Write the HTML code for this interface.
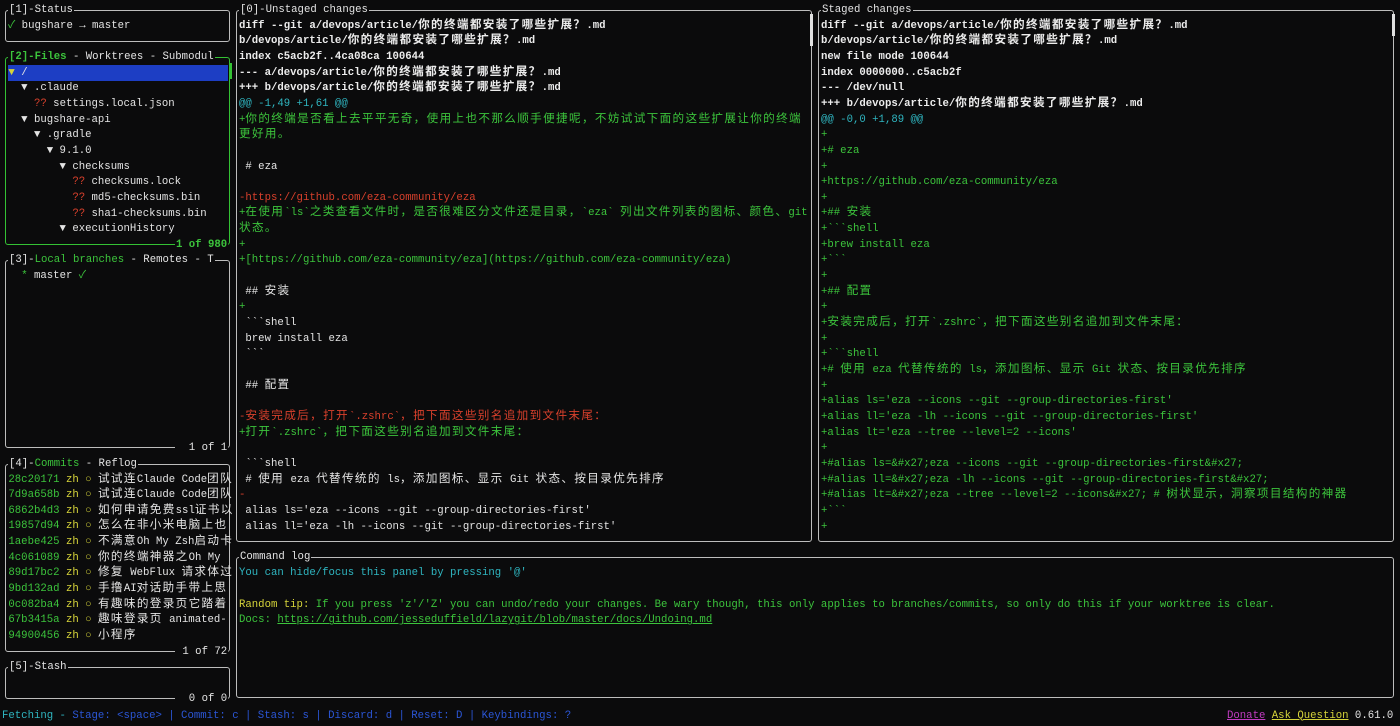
<!DOCTYPE html>
<html><head><meta charset="utf-8"><style>
html,body{margin:0;padding:0;background:#0b0b0c;width:1400px;height:726px;overflow:hidden}
body{position:relative;font-family:"Liberation Mono","Noto Sans CJK SC",monospace;font-size:10.67px;color:#e4e4e4}
.b{position:absolute;border:1px solid #bdbdbd;border-radius:3px;box-sizing:border-box}
.g{border-color:#34c234}
.t{position:absolute;background:#0b0b0c;white-space:pre;line-height:15.65px;padding:0 1px}
pre{position:absolute;margin:0;font:inherit;line-height:15.65px;white-space:pre}
.c{font-family:"Noto Sans CJK SC",sans-serif;font-size:11.6px;letter-spacing:1.35px;line-height:0}
.w{color:#ececec;font-weight:bold}
.gr{color:#3cc43c}.rd{color:#d8402c}.cy{color:#2fb5c0}.ye{color:#d6d43a}.bl{color:#2b56d6}.mg{color:#c23cc2}
.u{text-decoration:underline}
</style></head><body>
<div class="b" style="left:5px;top:10px;width:225px;height:32px"></div>
<div class="b g" style="left:5px;top:57px;width:225px;height:188px"></div>
<div class="b" style="left:5px;top:260px;width:225px;height:188px"></div>
<div class="b" style="left:5px;top:464px;width:225px;height:188px"></div>
<div class="b" style="left:5px;top:667px;width:225px;height:32px"></div>
<div class="b" style="left:236px;top:10px;width:576px;height:532px"></div>
<div class="b" style="left:818px;top:10px;width:576px;height:532px"></div>
<div class="b" style="left:236px;top:557px;width:1158px;height:141px"></div>
<div style="position:absolute;left:229px;top:63px;width:3px;height:16px;background:#34c234"></div>
<div style="position:absolute;left:810px;top:14px;width:3px;height:32px;background:#e0e0e0"></div>
<div style="position:absolute;left:1392px;top:14px;width:3px;height:22px;background:#e0e0e0"></div>
<div class="t" style="left:8px;top:3px">[1]-Status</div>
<div class="t" style="left:8px;top:50px"><span class="gr" style="font-weight:bold">[2]-Files</span> - Worktrees - Submodul</div>
<div class="t" style="left:8px;top:253px">[3]-<span class="gr">Local branches</span> - Remotes - T</div>
<div class="t" style="left:8px;top:457px">[4]-<span class="gr">Commits</span> - Reflog</div>
<div class="t" style="left:8px;top:660px">[5]-Stash</div>
<div class="t" style="left:239px;top:3px">[0]-Unstaged changes</div>
<div class="t" style="left:821px;top:3px">Staged changes</div>
<div class="t" style="left:239px;top:550px">Command log</div>
<div class="t gr" style="left:175px;top:238px;font-weight:bold">1 of 980</div>
<div class="t" style="left:175px;top:441px">  1 of 1</div>
<div class="t" style="left:175px;top:645px"> 1 of 72</div>
<div class="t" style="left:175px;top:692px">  0 of 0</div>
<pre style="left:8px;top:18.6px"><span class="gr">✓</span> bugshare → master</pre>
<div style="position:absolute;left:8px;top:65px;width:220px;height:15.6px;background:#1d3ec4"></div>
<pre style="left:8.4px;top:65.6px"><span class="ye">▼</span> /
  ▼ .claude
    <span class="rd">??</span> settings.local.json
  ▼ bugshare-api
    ▼ .gradle
      ▼ 9.1.0
        ▼ checksums
          <span class="rd">??</span> checksums.lock
          <span class="rd">??</span> md5-checksums.bin
          <span class="rd">??</span> sha1-checksums.bin
        ▼ executionHistory</pre>
<pre style="left:8.4px;top:269px">  <span class="gr">*</span> master <span class="gr">✓</span></pre>
<pre style="left:8.4px;top:472.5px"><span class="gr">28c20171</span> <span class="ye">zh</span> <span class="ye">○</span> <span class="c">试试连</span>Claude Code<span class="c">团队</span>
<span class="gr">7d9a658b</span> <span class="ye">zh</span> <span class="ye">○</span> <span class="c">试试连</span>Claude Code<span class="c">团队</span>
<span class="gr">6862b4d3</span> <span class="ye">zh</span> <span class="ye">○</span> <span class="c">如何申请免费</span>ssl<span class="c">证书以</span>
<span class="gr">19857d94</span> <span class="ye">zh</span> <span class="ye">○</span> <span class="c">怎么在非小米电脑上也</span>
<span class="gr">1aebe425</span> <span class="ye">zh</span> <span class="ye">○</span> <span class="c">不满意</span>Oh My Zsh<span class="c">启动卡</span>
<span class="gr">4c061089</span> <span class="ye">zh</span> <span class="ye">○</span> <span class="c">你的终端神器之</span>Oh My
<span class="gr">89d17bc2</span> <span class="ye">zh</span> <span class="ye">○</span> <span class="c">修复</span> WebFlux <span class="c">请求体过</span>
<span class="gr">9bd132ad</span> <span class="ye">zh</span> <span class="ye">○</span> <span class="c">手撸</span>AI<span class="c">对话助手带上思</span>
<span class="gr">0c082ba4</span> <span class="ye">zh</span> <span class="ye">○</span> <span class="c">有趣味的登录页它踏着</span>
<span class="gr">67b3415a</span> <span class="ye">zh</span> <span class="ye">○</span> <span class="c">趣味登录页</span> animated-
<span class="gr">94900456</span> <span class="ye">zh</span> <span class="ye">○</span> <span class="c">小程序</span></pre>
<pre style="left:239px;top:18.6px"><span class="w">diff --git a/devops/article/<span class="c">你的终端都安装了哪些扩展？</span>.md</span>
<span class="w">b/devops/article/<span class="c">你的终端都安装了哪些扩展？</span>.md</span>
<span class="w">index c5acb2f..4ca08ca 100644</span>
<span class="w">--- a/devops/article/<span class="c">你的终端都安装了哪些扩展？</span>.md</span>
<span class="w">+++ b/devops/article/<span class="c">你的终端都安装了哪些扩展？</span>.md</span>
<span class="cy">@@ -1,49 +1,61 @@</span>
<span class="gr">+<span class="c">你的终端是否看上去平平无奇，使用上也不那么顺手便捷呢，不妨试试下面的这些扩展让你的终端</span></span>
<span class="gr"><span class="c">更好用。</span></span>

 # eza

<span class="rd">-https://github.com/eza-community/eza</span>
<span class="gr">+<span class="c">在使用</span>&#96;ls&#96;<span class="c">之类查看文件时，是否很难区分文件还是目录，</span>&#96;eza&#96; <span class="c">列出文件列表的图标、颜色、</span>git</span>
<span class="gr"><span class="c">状态。</span></span>
<span class="gr">+</span>
<span class="gr">+[https://github.com/eza-community/eza](https://github.com/eza-community/eza)</span>

 ## <span class="c">安装</span>
<span class="gr">+</span>
 &#96;&#96;&#96;shell
 brew install eza
 &#96;&#96;&#96;

 ## <span class="c">配置</span>

<span class="rd">-<span class="c">安装完成后，打开</span>&#96;.zshrc&#96;<span class="c">，把下面这些别名追加到文件末尾：</span></span>
<span class="gr">+<span class="c">打开</span>&#96;.zshrc&#96;<span class="c">，把下面这些别名追加到文件末尾：</span></span>

 &#96;&#96;&#96;shell
 # <span class="c">使用</span> eza <span class="c">代替传统的</span> ls<span class="c">，添加图标、显示</span> Git <span class="c">状态、按目录优先排序</span>
<span class="rd">-</span>
 alias ls='eza --icons --git --group-directories-first'
 alias ll='eza -lh --icons --git --group-directories-first'</pre>
<pre style="left:821px;top:18.6px"><span class="w">diff --git a/devops/article/<span class="c">你的终端都安装了哪些扩展？</span>.md</span>
<span class="w">b/devops/article/<span class="c">你的终端都安装了哪些扩展？</span>.md</span>
<span class="w">new file mode 100644</span>
<span class="w">index 0000000..c5acb2f</span>
<span class="w">--- /dev/null</span>
<span class="w">+++ b/devops/article/<span class="c">你的终端都安装了哪些扩展？</span>.md</span>
<span class="cy">@@ -0,0 +1,89 @@</span>
<span class="gr">+
+# eza
+
+https://github.com/eza-community/eza
+
+## <span class="c">安装</span>
+&#96;&#96;&#96;shell
+brew install eza
+&#96;&#96;&#96;
+
+## <span class="c">配置</span>
+
+<span class="c">安装完成后，打开</span>&#96;.zshrc&#96;<span class="c">，把下面这些别名追加到文件末尾：</span>
+
+&#96;&#96;&#96;shell
+# <span class="c">使用</span> eza <span class="c">代替传统的</span> ls<span class="c">，添加图标、显示</span> Git <span class="c">状态、按目录优先排序</span>
+
+alias ls='eza --icons --git --group-directories-first'
+alias ll='eza -lh --icons --git --group-directories-first'
+alias lt='eza --tree --level=2 --icons'
+
+#alias ls=&amp;#x27;eza --icons --git --group-directories-first&amp;#x27;
+#alias ll=&amp;#x27;eza -lh --icons --git --group-directories-first&amp;#x27;
+#alias lt=&amp;#x27;eza --tree --level=2 --icons&amp;#x27; # <span class="c">树状显示，洞察项目结构的神器</span>
+&#96;&#96;&#96;
+</span></pre>
<pre style="left:239px;top:566.4px"><span class="cy">You can hide/focus this panel by pressing '@'</span>

<span class="ye">Random tip:</span><span class="gr"> If you press 'z'/'Z' you can undo/redo your changes. Be wary though, this only applies to branches/commits, so only do this if your worktree is clear.</span>
<span class="gr">Docs: <span class="u">https://github.com/jesseduffield/lazygit/blob/master/docs/Undoing.md</span></span></pre>
<pre style="left:2px;top:708.5px"><span class="cy">Fetching -</span><span class="bl"> Stage: &lt;space&gt; | Commit: c | Stash: s | Discard: d | Reset: D | Keybindings: ?</span></pre>
<pre style="left:1227px;top:708.5px"><span class="mg u">Donate</span> <span class="ye u">Ask Question</span> 0.61.0</pre>
</body></html>
